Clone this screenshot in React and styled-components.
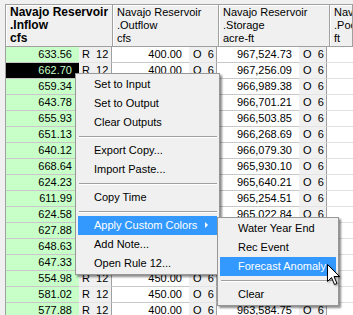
import React from "react";
import styled, { createGlobalStyle } from "styled-components";

const GlobalStyle = createGlobalStyle`
  html, body {
    margin: 0;
    padding: 0;
    background: #f0f0f0;
    overflow: hidden;
  }
  #root {
    width: 353px;
    height: 315px;
    position: relative;
    overflow: hidden;
  }
`;

const Page = styled.div`
  position: relative;
  width: 353px;
  height: 315px;
  padding: 4px 0 0 5px;
  box-sizing: border-box;
  font-family: "Liberation Sans", Arial, sans-serif;
  font-size: 11px;
  color: #000;
`;

const Table = styled.div`
  border-left: 1px solid #a0a0a0;
  border-top: 1px solid #a0a0a0;
  background: #ffffff;
  height: 320px;
`;

const HeaderRow = styled.div`
  display: flex;
  height: 42px;
  background: #f0f0f0;
  border-bottom: 1px solid #a0a0a0;
  box-sizing: border-box;
`;

const HeaderCell = styled.div`
  flex: ${(p) => (p.$w ? `0 0 ${p.$w}px` : "1 1 auto")};
  box-sizing: border-box;
  border-right: 1px solid #a0a0a0;
  box-shadow: inset 1px 1px 0 #ffffff;
  padding: 1px 0 0 4px;
  line-height: 13px;
  font-size: ${(p) => (p.$bold ? "12px" : "11px")};
  font-weight: ${(p) => (p.$bold ? 700 : 400)};
  white-space: nowrap;
  overflow: hidden;
`;

const Row = styled.div`
  display: flex;
  height: 16px;
`;

const ValueCell = styled.div`
  flex: 0 0 ${(p) => p.$w}px;
  box-sizing: border-box;
  height: 16px;
  line-height: 15px;
  text-align: right;
  padding-right: 7px;
  border-bottom: 1px solid #c8c8c8;
  background: ${(p) => (p.$selected ? "#000000" : p.$green ? "#c8ffc8" : "#ffffff")};
  color: ${(p) => (p.$selected ? "#c8ffc8" : "#000000")};
  white-space: nowrap;
`;

const FlagCell = styled.div`
  flex: 0 0 ${(p) => p.$w}px;
  box-sizing: border-box;
  height: 16px;
  line-height: 15px;
  padding-left: ${(p) => p.$pad}px;
  background: #f0f0f0;
  border-bottom: 1px solid #e4e4e4;
  border-right: 1px solid #a0a0a0;
  white-space: pre;
`;

const EmptyCell = styled.div`
  flex: 1 1 auto;
  height: 16px;
  box-sizing: border-box;
  border-bottom: 1px solid #e0e0e0;
`;

const Menu = styled.div`
  position: absolute;
  left: ${(p) => p.$x}px;
  top: ${(p) => p.$y}px;
  width: ${(p) => p.$w}px;
  box-sizing: border-box;
  background: #f0f0f0;
  border: 1px solid #979797;
  padding: 1px 2px;
  box-shadow: 2px 2px 2px rgba(0, 0, 0, 0.45);
  font-size: 11px;
`;

const Item = styled.div`
  position: relative;
  height: 19px;
  line-height: 19px;
  padding-left: ${(p) => p.$pad}px;
  background: ${(p) => (p.$active ? "#3399ff" : "transparent")};
  color: ${(p) => (p.$active ? "#ffffff" : "#000000")};
  white-space: nowrap;
`;

const Arrow = styled.span`
  position: absolute;
  right: 9px;
  top: 6px;
  width: 0;
  height: 0;
  border-top: 3px solid transparent;
  border-bottom: 3px solid transparent;
  border-left: 3px solid ${(p) => (p.$active ? "#ffffff" : "#000000")};
`;

const Separator = styled.div`
  height: 9px;
  position: relative;
  margin-left: 1px;
  &::after {
    content: "";
    position: absolute;
    left: 0;
    right: 0;
    top: 4px;
    border-top: 1px solid #a0a0a0;
    border-bottom: 1px solid #ffffff;
  }
`;

const Cursor = styled.svg`
  position: absolute;
  left: 327px;
  top: 264px;
  filter: drop-shadow(1px 1px 1px rgba(0, 0, 0, 0.4));
`;

const cols = [
  { v: 73, f: 33, pad: 3 },
  { v: 77, f: 28, pad: 4 },
  { v: 82, f: 28, pad: 4 },
];

const inflow = [
  "633.56", "662.70", "659.34", "643.78", "655.93", "651.13", "640.12", "668.64",
  "624.23", "611.99", "624.58", "627.88", "648.63", "647.33", "554.98", "581.02", "577.88",
];
const outflow = [
  "400.00", "400.00", "400.00", "400.00", "400.00", "400.00", "400.00", "400.00",
  "400.00", "400.00", "400.00", "400.00", "400.00", "450.00", "450.00", "450.00", "400.00",
];
const storage = [
  "967,524.73", "967,256.09", "966,989.38", "966,701.21", "966,503.85", "966,268.69",
  "966,079.30", "965,930.10", "965,640.21", "965,254.51", "965,022.84", "964,801.37",
  "964,572.90", "964,361.48", "964,105.62", "963,842.11", "963,584.75",
];

const headers = [
  { w: 107, lines: ["Navajo Reservoir", ".Inflow", "cfs"], bold: true },
  { w: 106, lines: ["Navajo Reservoir", ".Outflow", "cfs"] },
  { w: 111, lines: ["Navajo Reservoir", ".Storage", "acre-ft"] },
  { lines: ["Navajo Reservoir", ".Pool Elevation", "ft"] },
];

const mainMenu = [
  "Set to Input", "Set to Output", "Clear Outputs", "-",
  "Export Copy...", "Import Paste...", "-",
  "Copy Time", "-",
  { label: "Apply Custom Colors", active: true, sub: true },
  "Add Note...", "Open Rule 12...",
];

const subMenu = [
  "Water Year End", "Rec Event", { label: "Forecast Anomaly", active: true }, "-", "Clear",
];

function MenuList({ items, x, y, w, pad }) {
  return (
    <Menu $x={x} $y={y} $w={w}>
      {items.map((it, i) => {
        if (it === "-") return <Separator key={i} />;
        const item = typeof it === "string" ? { label: it } : it;
        return (
          <Item key={i} $pad={pad} $active={item.active}>
            {item.label}
            {item.sub && <Arrow $active={item.active} />}
          </Item>
        );
      })}
    </Menu>
  );
}

export default function App() {
  return (
    <Page>
      <GlobalStyle />
      <Table>
        <HeaderRow>
          {headers.map((h, i) => (
            <HeaderCell key={i} $w={h.w} $bold={h.bold}>
              {h.lines.map((l) => (
                <div key={l}>{l}</div>
              ))}
            </HeaderCell>
          ))}
        </HeaderRow>
        {inflow.map((val, r) => (
          <Row key={r}>
            <ValueCell $w={cols[0].v} $green $selected={r === 1}>
              {val}
            </ValueCell>
            <FlagCell $w={cols[0].f} $pad={cols[0].pad}>R  12</FlagCell>
            <ValueCell $w={cols[1].v}>{outflow[r]}</ValueCell>
            <FlagCell $w={cols[1].f} $pad={cols[1].pad}>O  6</FlagCell>
            <ValueCell $w={cols[2].v}>{storage[r]}</ValueCell>
            <FlagCell $w={cols[2].f} $pad={cols[2].pad}>O  6</FlagCell>
            <EmptyCell />
          </Row>
        ))}
      </Table>

      <MenuList items={mainMenu} x={75} y={73} w={145} pad={16} />
      <MenuList items={subMenu} x={217} y={217} w={122} pad={18} />

      <Cursor width="14" height="22" viewBox="0 0 14 22">
        <polygon
          points="0.5,0.5 0.5,17.5 4.5,13.5 7.5,20.5 10,19.5 7,12.5 12.5,12.5"
          fill="#ffffff"
          stroke="#000000"
          strokeWidth="1"
          strokeLinejoin="miter"
        />
      </Cursor>
    </Page>
  );
}
